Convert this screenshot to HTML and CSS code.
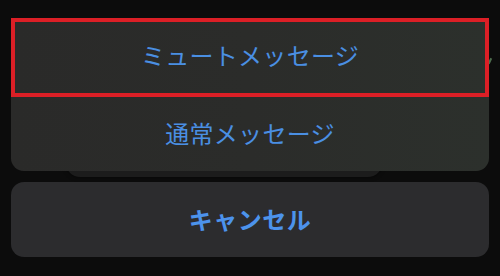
FILE: index.html
```html
<!DOCTYPE html>
<html lang="ja">
<head>
<meta charset="utf-8">
<link rel="stylesheet" href="styles.css">
</head>
<body>
<div class="sheet">
  <div class="behind"></div>
  <div class="tick"></div>
  <div class="group">
    <div class="row row-first">ミュートメッセージ<div class="highlight"></div></div>
    <div class="row">通常メッセージ</div>
  </div>
  <div class="cancel">キャンセル</div>
</div>
</body>
</html>
```
FILE: styles.css
```css
html, body {
  margin: 0;
  padding: 0;
  background: #0c0c0c;
}
body {
  width: 500px;
  height: 276px;
  overflow: hidden;
  font-family: "Noto Sans CJK JP", "Noto Sans", sans-serif;
}
.sheet {
  position: relative;
  padding: 18px 11px 0 11px;
  display: flex;
  flex-direction: column;
  gap: 11px;
}
.behind {
  position: absolute;
  left: 66px;
  width: 316px;
  top: 140px;
  height: 37px;
  border-radius: 0 0 14px 14px;
  background: #1c1c1c;
  box-shadow: 0 0 4px rgba(0,0,0,0.6);
}
.tick {
  position: absolute;
  left: 489px;
  top: 58px;
  width: 2px;
  height: 6px;
  background: #4e6e4e;
  transform: rotate(25deg);
}
.group {
  position: relative;
  z-index: 1;
  border-radius: 13px;
  background: linear-gradient(90deg, #2a2a29 0%, #2b2c2a 50%, #2c302c 100%);
  display: flex;
  flex-direction: column;
}
.row {
  position: relative;
  height: 77px;
  box-sizing: border-box;
  display: flex;
  align-items: center;
  justify-content: center;
  color: #4a8fe3;
  font-size: 24px;
  letter-spacing: 0.3px;
}
.row + .row {
  height: 76px;
  padding-bottom: 2px;
}
.row-first {
  padding-bottom: 4px;
}
.highlight {
  position: absolute;
  left: 0;
  right: 0;
  top: 0;
  height: 79px;
  border: 4px solid #dc1f26;
  box-sizing: border-box;
}
.cancel {
  position: relative;
  z-index: 1;
  height: 75px;
  box-sizing: border-box;
  padding-bottom: 3px;
  border-radius: 13px;
  background: #2c2c2e;
  display: flex;
  align-items: center;
  justify-content: center;
  color: #4c93ec;
  font-size: 24px;
  font-weight: 700;
  letter-spacing: 0.5px;
}
```
